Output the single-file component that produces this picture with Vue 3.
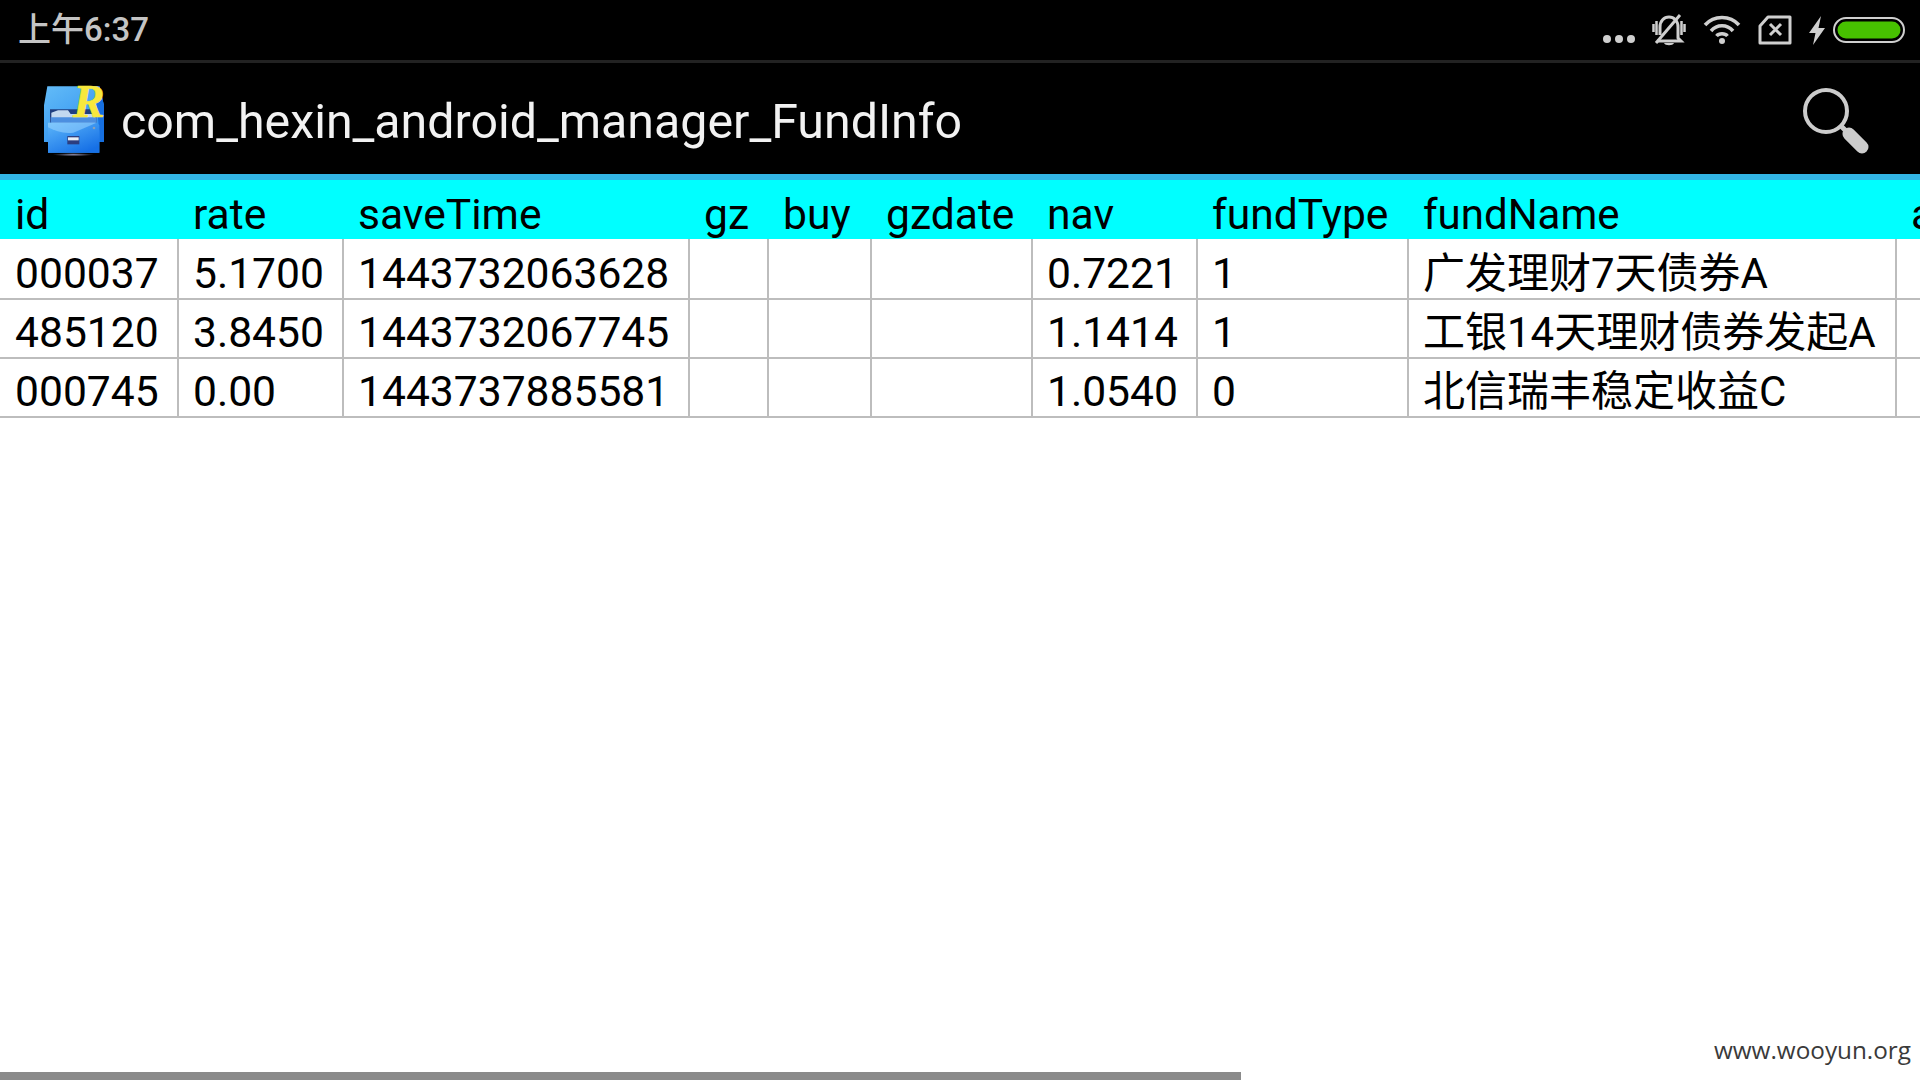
<script setup>
const columns = [
  { name: 'id', width: 179 },
  { name: 'rate', width: 165 },
  { name: 'saveTime', width: 346 },
  { name: 'gz', width: 79 },
  { name: 'buy', width: 103 },
  { name: 'gzdate', width: 161 },
  { name: 'nav', width: 165 },
  { name: 'fundType', width: 211 },
  { name: 'fundName', width: 488 },
  { name: 'a', width: 200 }
]
const gridTemplate = columns.map((c) => c.width + 'px').join(' ')
const rows = [
  ['000037', '5.1700', '1443732063628', '', '', '', '0.7221', '1', '广发理财7天债券A', ''],
  ['485120', '3.8450', '1443732067745', '', '', '', '1.1414', '1', '工银14天理财债券发起A', ''],
  ['000745', '0.00', '1443737885581', '', '', '', '1.0540', '0', '北信瑞丰稳定收益C', '']
]
</script>

<template>
  <div class="screen">
    <header class="status">
      <span class="time">上午6:37</span>
      <div class="status-icons">
        <svg class="i-dots" width="36" height="32" viewBox="0 0 36 32">
          <circle cx="8" cy="25" r="4" /><circle cx="20" cy="25" r="4" /><circle cx="32" cy="25" r="4" />
        </svg>
        <svg class="i-bell" width="34" height="32" viewBox="0 0 34 32">
          <path class="st" d="M8 21 V13 C8 7 12 3 17 3 C22 3 26 7 26 13 V24 L29 27 H5" />
          <path class="st" d="M4 29 L28 1" />
          <path d="M12 29 H22 C21 32 13 32 12 29 Z" />
          <path class="st thin" d="M1.500 10 V18 M4.500 7 V21 M29.500 7 V21 M32.500 10 V18" />
        </svg>
        <svg class="i-wifi" width="38" height="32" viewBox="0 0 38 32">
          <path class="st wide" d="M2 11 C11 1 27 1 36 11" />
          <path class="st wide" d="M8 17 C14 10 24 10 30 17" />
          <path class="st wide" d="M13.500 22 C16 19 22 19 24.500 22" />
          <circle cx="19" cy="27" r="3" />
        </svg>
        <svg class="i-sim" width="34" height="32" viewBox="0 0 34 32">
          <path class="st" d="M10 3 H32 V29 H2 V12 Z" stroke-linejoin="round" />
          <path class="st" d="M12 10 L23 21 M23 10 L12 21" />
        </svg>
        <svg class="i-bolt" width="18" height="32" viewBox="0 0 18 32">
          <path d="M13 2 L1 19 H7.500 L5 31 L17 14 H10.500 Z" />
        </svg>
        <svg class="i-batt" width="72" height="32" viewBox="0 0 72 32">
          <rect x="1" y="4" width="70" height="24" rx="12" fill="none" stroke="#cfcfcf" stroke-width="2" />
          <rect x="4.500" y="7.500" width="63" height="17" rx="8.500" fill="#47c100" />
        </svg>
      </div>
    </header>

    <div class="action">
      <svg class="app-icon" width="70" height="80" viewBox="0 0 210 240">
        <defs>
          <linearGradient id="lid" x1="0" y1="0" x2="0.6" y2="1">
            <stop offset="0" stop-color="#63bcf8" /><stop offset="1" stop-color="#2a8cee" />
          </linearGradient>
          <linearGradient id="front" x1="0" y1="0" x2="0.7" y2="1">
            <stop offset="0" stop-color="#5cb6fa" /><stop offset="1" stop-color="#1670e6" />
          </linearGradient>
          <radialGradient id="shadow">
            <stop offset="0" stop-color="#8a8aa8" /><stop offset="1" stop-color="#000" />
          </radialGradient>
        </defs>
        <ellipse cx="100" cy="218" rx="62" ry="5" fill="url(#shadow)" />
        <path d="M22 13 H178 L192 70 V180 H178 V212 H24 V180 H12 V70 Z" fill="url(#lid)" />
        <path d="M165 13 H178 L192 70 V180 H178 V150 Z" fill="#166fe0" />
        <path d="M30 82 H170 V122 H30 Z" fill="#1f3f80" />
        <path d="M34 92 L54 85 H84 L92 96 H166 V122 H34 Z" fill="#c3d9f0" />
        <path d="M32 106 H170 V122 H32 Z" fill="#4c8fe0" />
        <path d="M24 122 H170 L178 130 V212 H24 Z" fill="url(#front)" />
        <path d="M24 122 H170 L100 152 C72 156 46 148 24 136 Z" fill="#a4daff" opacity="0.5" />
        <rect x="82" y="162" width="36" height="25" fill="#2c3e80" />
        <rect x="84" y="166" width="32" height="9" fill="#e8eef6" />
        <circle cx="162" cy="138" r="4" fill="#8aa0b8" />
        <text x="99" y="106" class="app-r">R</text>
      </svg>
      <h1 class="title">com_hexin_android_manager_FundInfo</h1>
      <svg class="search" width="70" height="72" viewBox="0 0 70 72">
        <circle cx="24" cy="28" r="21" fill="none" stroke="#cccccc" stroke-width="4" />
        <path d="M39 43 L46 50" stroke="#cccccc" stroke-width="5" />
        <path d="M47 51 L60 64" stroke="#cccccc" stroke-width="13" stroke-linecap="round" />
      </svg>
    </div>
    <div class="accent"></div>

    <main class="table">
      <div class="row head" :style="{ gridTemplateColumns: gridTemplate }">
        <div v-for="c in columns" :key="c.name" class="cell">{{ c.name }}</div>
      </div>
      <div v-for="r in rows" :key="r[0]" class="row body" :style="{ gridTemplateColumns: gridTemplate }">
        <div v-for="(v, i) in r" :key="i" class="cell">{{ v }}</div>
      </div>
    </main>

    <div class="watermark">www.wooyun.org</div>
    <div class="scrollbar"></div>
  </div>
</template>

<style scoped>
.screen {
  position: relative;
  width: 1920px;
  height: 1080px;
  overflow: hidden;
  background: #fff;
  display: flex;
  flex-direction: column;
  font-family: Roboto, "Noto Sans CJK SC", sans-serif;
}
.status {
  height: 60px;
  background: #000;
  border-bottom: 3px solid #222;
  display: flex;
  align-items: center;
  justify-content: space-between;
  padding: 0 15px 0 18px;
  flex: none;
}
.time {
  color: #c4c4c4;
  font-size: 33px;
  font-weight: 500;
  line-height: 56px;
  font-family: Roboto, "Noto Sans CJK SC", sans-serif;
}
.status-icons {
  display: flex;
  align-items: center;
}
.status-icons svg {
  fill: #cfcfcf;
  display: block;
}
.st {
  fill: none;
  stroke: #cfcfcf;
  stroke-width: 3;
}
.thin { stroke-width: 2.500; }
.wide { stroke-width: 3.500; }
.i-bell, .i-wifi, .i-sim { margin-left: 17px; }
.i-bolt { margin-left: 16px; }
.i-batt { margin-left: 7px; }
.action {
  height: 111px;
  background: #000;
  display: flex;
  align-items: center;
  padding-left: 40px;
  flex: none;
}
.app-icon {
  margin-top: 7px;
  flex: none;
}
.app-r {
  font-family: "Liberation Serif", serif;
  font-style: italic;
  font-weight: 700;
  font-size: 142px;
  fill: #f7e83c;
  stroke: #f7e83c;
  stroke-width: 2px;
}
.title {
  margin: 6px 0 0 11px;
  color: #f2f2f2;
  font-size: 48.300px;
  font-weight: 400;
  flex: 1;
  white-space: nowrap;
}
.search {
  margin-right: 48px;
}
.accent {
  height: 6px;
  background: #33b5e5;
  flex: none;
}
.table {
  flex: 1;
  overflow: hidden;
}
.row {
  display: grid;
  width: 2097px;
  font-size: 42.600px;
  color: #000;
}
.head {
  height: 59px;
  background: #00ffff;
}
.body {
  height: 59px;
  border-bottom: 2px solid #bdbdbd;
  box-sizing: border-box;
}
.head + .body {
  height: 61px;
}
.cell {
  padding: 12px 0 0 14px;
  white-space: nowrap;
  line-height: 45px;
  box-sizing: border-box;
}
.cell:first-child {
  padding-left: 15px;
}
.cell:nth-child(9) {
  font-size: 42px;
}
.body .cell {
  border-right: 2px solid #bdbdbd;
  padding-top: 10px;
}
.head + .body .cell {
  padding-top: 12px;
}
.watermark {
  position: absolute;
  right: 9px;
  bottom: 14px;
  font-family: "Open Sans", sans-serif;
  font-size: 24.300px;
  color: #3a3a3a;
}
.scrollbar {
  position: absolute;
  left: 0;
  bottom: 0;
  width: 1241px;
  height: 8px;
  background: #8a8a8a;
}
</style>
